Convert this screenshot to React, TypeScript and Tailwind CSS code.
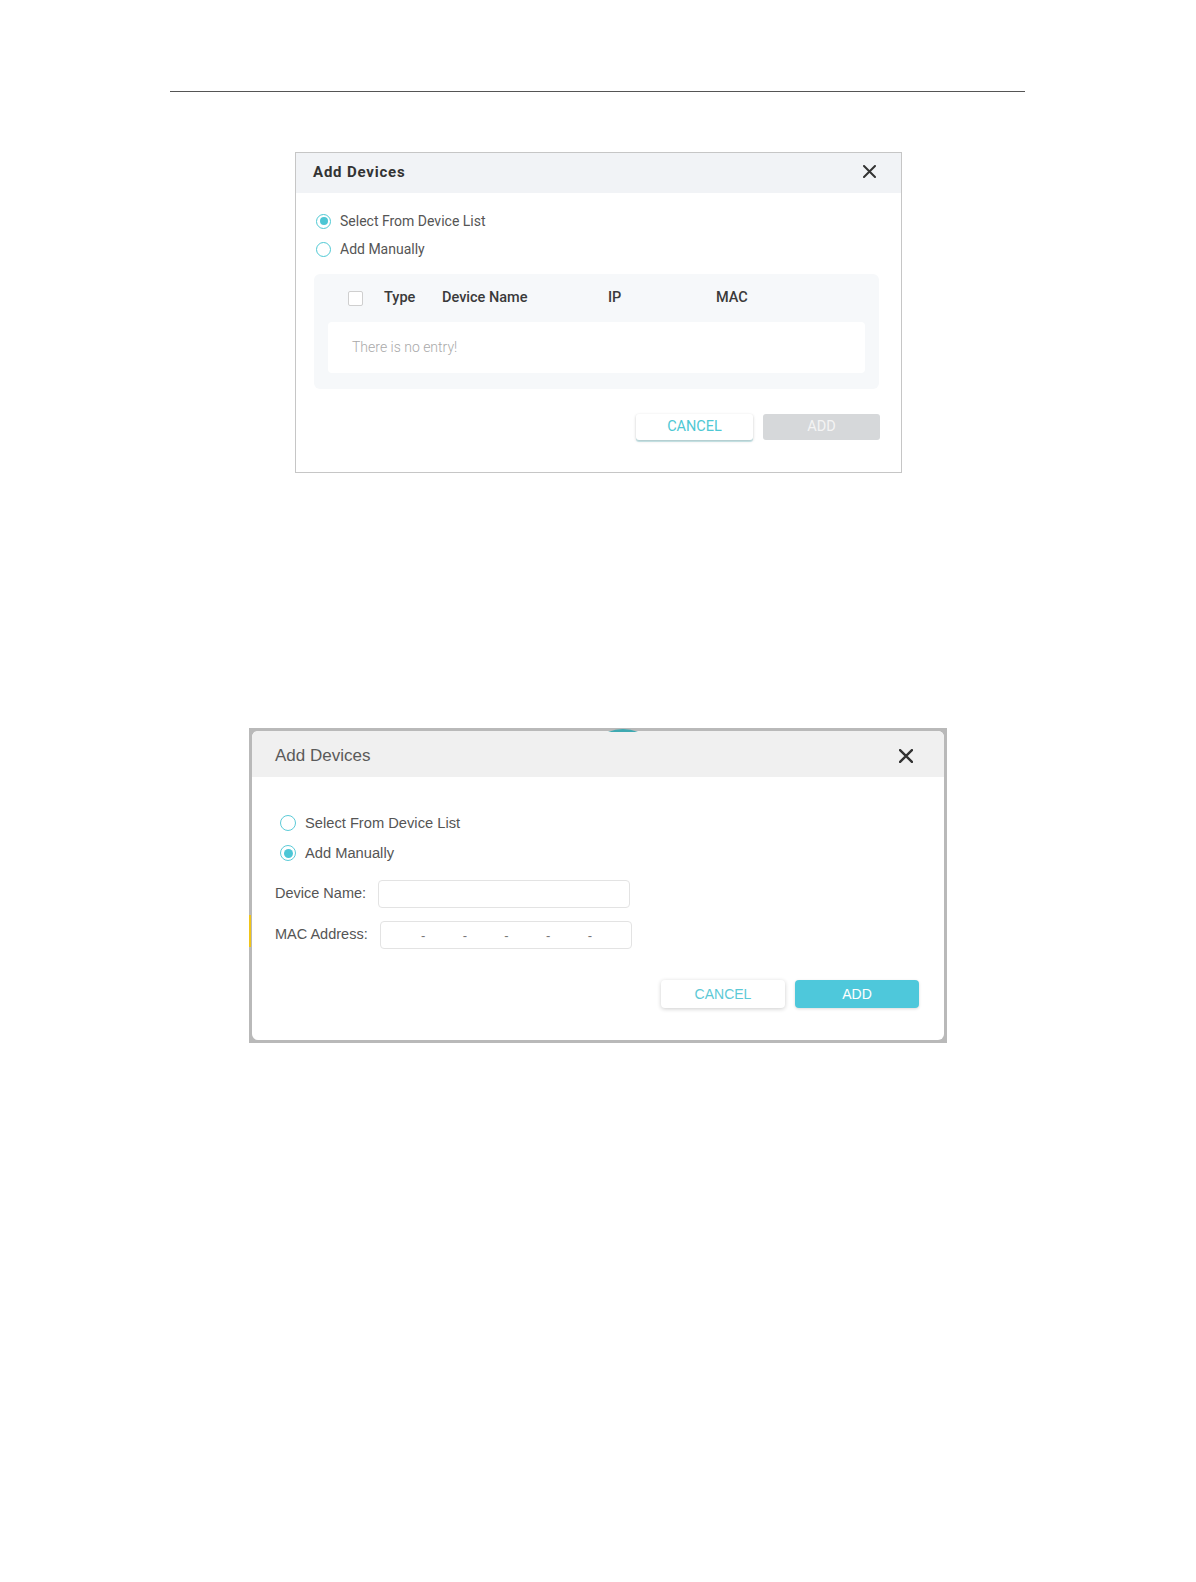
import React from 'react';

// 다이얼로그 두 장이 들어간 매뉴얼 페이지 (Add Devices)

function CloseIcon({ size = 13, stroke = 2 }: { size?: number; stroke?: number }) {
  return (
    <svg width={size} height={size} viewBox="0 0 13 13" fill="none">
      <path d="M1 1 L12 12 M12 1 L1 12" stroke="#333" strokeWidth={stroke} strokeLinecap="round" />
    </svg>
  );
}

function Radio({ checked, big }: { checked?: boolean; big?: boolean }) {
  return (
    <span
      className={
        big
          ? 'w-[16px] h-[16px] rounded-full border-[1.5px] border-[#5ccbd8] bg-white flex items-center justify-center shrink-0'
          : 'w-[15px] h-[15px] rounded-full border-[1.5px] border-[#4fc9d4] bg-white flex items-center justify-center shrink-0'
      }
    >
      {checked && (
        <span className={big ? 'w-[9px] h-[9px] rounded-full bg-[#4cc6d6]' : 'w-[8px] h-[8px] rounded-full bg-[#4cc6d4]'} />
      )}
    </span>
  );
}

function ListDialog() {
  return (
    <div
      className="ml-[295px] mt-[60px] w-[607px] h-[321px] border border-[#c6c6c6] bg-white flex flex-col"
      style={{ fontFamily: 'Roboto, "Noto Sans", sans-serif' }}
    >
      {/* 헤더 */}
      <div className="h-[40px] bg-[#f1f3f6] flex items-center justify-between pl-[17px] pr-[25px] pb-[2px]">
        <span className="text-[15px] font-bold tracking-[0.8px] text-[#333]">Add Devices</span>
        <span className="mb-[2px] flex">
          <CloseIcon size={13} stroke={2} />
        </span>
      </div>

      {/* 라디오 */}
      <div className="pt-[14px] pl-[20px] flex flex-col text-[14px] text-[#555]">
        <label className="h-[28px] flex items-center gap-[9px]">
          <Radio checked />
          <span>Select From Device List</span>
        </label>
        <label className="h-[28px] flex items-center gap-[9px]">
          <Radio />
          <span>Add Manually</span>
        </label>
      </div>

      {/* 테이블 */}
      <div className="mt-[11px] ml-[18px] mr-[22px] h-[115px] rounded-[6px] bg-[#f6f8fa] flex flex-col">
        <div className="h-[48px] flex items-center pl-[34px] text-[14.5px] font-medium text-[#3a3a3a]">
          <span className="w-[15px] h-[15px] rounded-[2px] border border-[#cfcfcf] bg-white shrink-0" />
          <span className="ml-[21px] w-[58px]">Type</span>
          <span className="w-[166px]">Device Name</span>
          <span className="w-[108px]">IP</span>
          <span>MAC</span>
        </div>
        <div className="mx-[14px] h-[51px] rounded-[4px] bg-white flex items-center pl-[24px] text-[14px] font-light text-[#a9a9a9]">
          There is no entry!
        </div>
      </div>

      {/* 버튼 */}
      <div className="mt-[25px] flex justify-end gap-[10px] pr-[21px]">
        <button
          type="button"
          className="w-[117px] h-[26px] rounded-[3px] bg-white text-[14.5px] text-[#4fc8d4] shadow-[0_1px_3px_rgba(0,0,0,0.22),0_2px_0_rgba(79,200,212,0.25)]"
        >
          CANCEL
        </button>
        <button
          type="button"
          className="w-[117px] h-[26px] rounded-[3px] bg-[#d6d8da] text-[14.5px] text-[#f4f4f4]"
        >
          ADD
        </button>
      </div>
    </div>
  );
}

function ManualDialog() {
  return (
    <div
      className="relative ml-[249px] mt-[255px] w-[698px] h-[315px] bg-[#b9b9b9] p-[3px]"
      style={{ fontFamily: '"Liberation Sans", Arial, sans-serif' }}
    >
      {/* 뒤에 보이는 배경 조각 */}
      <div className="absolute left-0 top-[187px] w-[2px] h-[32px] bg-[#f0c419]" />
      <svg className="absolute left-[358px] top-0" width="32" height="4" viewBox="0 0 32 4">
        <path d="M1 4 Q16 -2 31 4 Z" fill="#3ea9b1" />
      </svg>

      <div className="w-full h-full rounded-[6px] bg-white overflow-hidden flex flex-col">
        <div className="h-[46px] bg-[#f0f0f0] flex items-center justify-between pl-[23px] pr-[31px] pt-[3px] shrink-0">
          <span className="text-[17px] text-[#5a5a5a]">Add Devices</span>
          <CloseIcon size={14} stroke={2.2} />
        </div>

        <div className="pt-[31px] pl-[28px] flex flex-col text-[14.7px] text-[#555]">
          <label className="h-[30px] flex items-center gap-[9px]">
            <Radio big />
            <span>Select From Device List</span>
          </label>
          <label className="h-[30px] flex items-center gap-[9px]">
            <Radio big checked />
            <span>Add Manually</span>
          </label>
        </div>

        <div className="pl-[23px] flex flex-col text-[14.5px] text-[#555]">
          <div className="mt-[12px] h-[28px] flex items-center gap-[12px]">
            <span>Device Name:</span>
            <div className="w-[252px] h-[28px] rounded-[4px] border border-[#e3e3e3] bg-white" />
          </div>
          <div className="mt-[13px] h-[28px] flex items-center gap-[12px]">
            <span>MAC Address:</span>
            <div className="w-[252px] h-[28px] rounded-[4px] border border-[#e3e3e3] bg-white grid grid-cols-6 text-[13px] text-[#777]">
              {[0, 1, 2, 3, 4, 5].map((i) => (
                <div key={i} className="relative">
                  {i < 5 && <span className="absolute right-[-3px] top-[4px]">-</span>}
                </div>
              ))}
            </div>
          </div>
        </div>

        <div className="mt-[31px] flex justify-end gap-[10px] pr-[25px] text-[14px]">
          <button
            type="button"
            className="w-[124px] h-[28px] rounded-[4px] bg-white text-[#5cc9d6] shadow-[0_1px_4px_rgba(0,0,0,0.2)]"
          >
            CANCEL
          </button>
          <button
            type="button"
            className="w-[124px] h-[28px] rounded-[4px] bg-[#4ec8db] text-white shadow-[0_1px_3px_rgba(0,0,0,0.15)]"
          >
            ADD
          </button>
        </div>
      </div>
    </div>
  );
}

export default function App() {
  return (
    <div className="w-[1196px] min-h-[1582px] bg-white">
      <div className="pt-[91px] pl-[170px]">
        <div className="w-[855px] h-px bg-[#555]" />
      </div>
      <ListDialog />
      <ManualDialog />
    </div>
  );
}
